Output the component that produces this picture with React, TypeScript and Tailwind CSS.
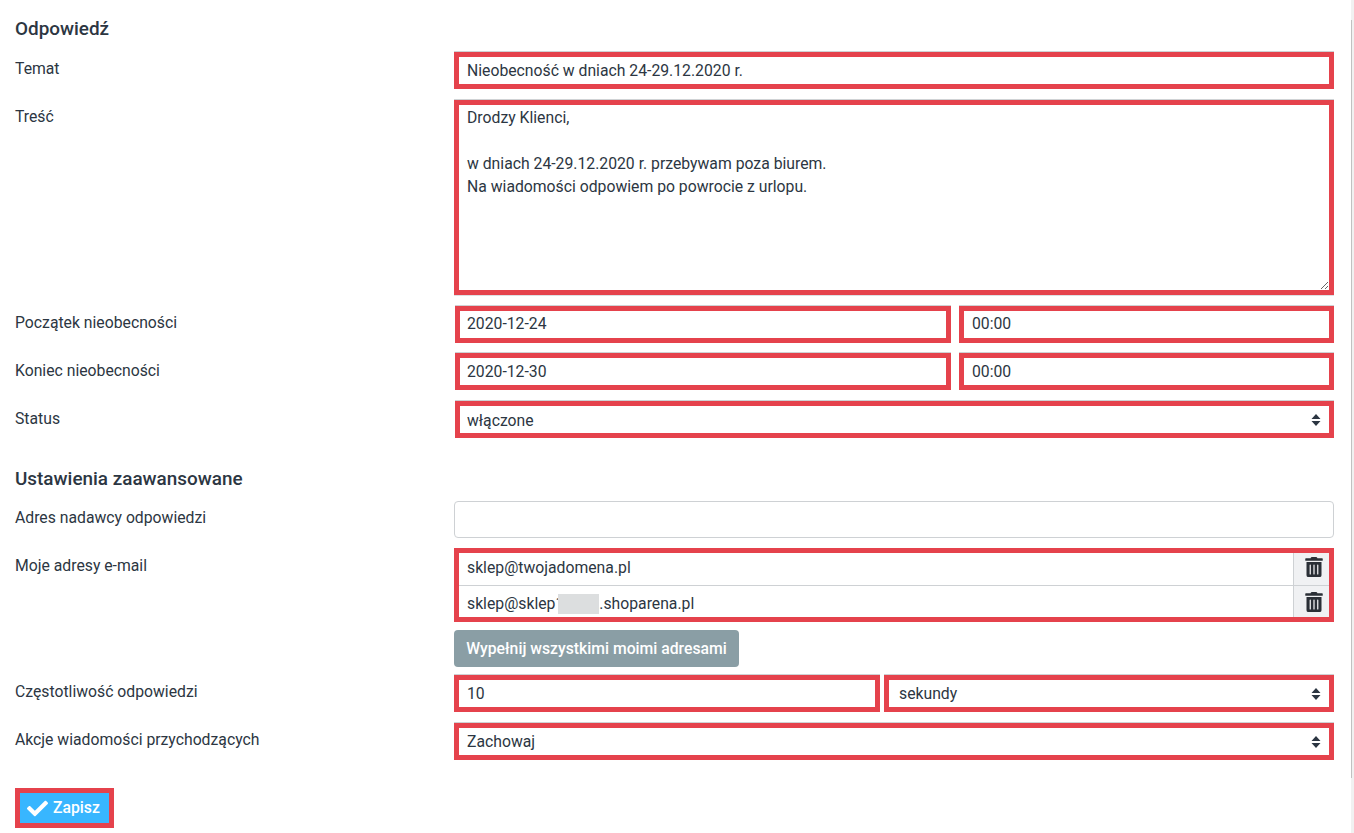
import type { ReactNode } from 'react';
import { FaCheck, FaTrashAlt } from 'react-icons/fa';

const boxed = 'border-[5px] border-[#e5424c] shadow-[0_-1px_0_#cfd2d4]';
const inputBase = 'block w-full bg-white pr-2 text-[15.75px] text-[#2c3642] outline-none';

function Row({ label, children, className, labelClass }: { label: string; children: ReactNode; className?: string; labelClass?: string }) {
  return (
    <div className={`flex ${className ?? ''}`}>
      <div className={`w-[439px] shrink-0 text-[15.75px] leading-[23px] text-[#2c3642] ${labelClass ?? 'pt-[5px]'}`}>{label}</div>
      <div className="w-[880px] shrink-0">{children}</div>
    </div>
  );
}

function Arrows() {
  return (
    <svg viewBox="0 0 10 14" className="pointer-events-none absolute right-[8px] top-[7px] h-[14px] w-[10px]">
      <path d="M5 1 L9.5 6 H0.5 Z M5 13 L0.5 8 H9.5 Z" fill="#2c3642" />
    </svg>
  );
}

function Select({ value, options, className, selectClass }: { value: string; options: string[]; className?: string; selectClass?: string }) {
  return (
    <div className={`relative ${boxed} ${className ?? ''}`}>
      <select defaultValue={value} className={`${inputBase} h-[27px] appearance-none ${selectClass ?? 'pl-2'}`}>
        {options.map(o => (
          <option key={o}>{o}</option>
        ))}
      </select>
      <Arrows />
    </div>
  );
}

function TextField({ value, className }: { value: string; className?: string }) {
  return <input readOnly value={value} className={`${inputBase} ${boxed} box-border h-[37px] ${className ?? 'pl-2'}`} />;
}

function EmailLine({ children, divider }: { children: ReactNode; divider?: boolean }) {
  return (
    <div className={`flex ${divider ? 'h-[33px] border-b border-[#ced1d4]' : 'h-[31px]'}`}>
      <div className={`flex flex-1 items-center pl-2 text-[15.75px] text-[#2c3642] ${divider ? 'pb-[3px]' : 'pt-[4px]'}`}>{children}</div>
      <div className={`flex w-[36px] items-center justify-center border-l border-[#ced1d4] bg-[#f0f1f3] pl-[4px] ${divider ? 'pb-[5px]' : 'pt-[1px]'}`}>
        <FaTrashAlt size={20} className="text-[#2a2f36]" />
      </div>
    </div>
  );
}

export default function App() {
  return (
    <div className="flex h-[833px] w-full overflow-hidden bg-white font-['Roboto',sans-serif]">
      <main className="flex-1 pl-[15px]">
        <h2 className="pt-[18px] pb-[12px] text-[18.9px] leading-[22px] font-medium text-[#2c3642]">Odpowiedź</h2>

        <Row label="Temat" className="mb-[11px]">
          <TextField value="Nieobecność w dniach 24-29.12.2020 r." />
        </Row>
        <Row label="Treść" className="mb-[11px]">
          <textarea
            readOnly
            value={'Drodzy Klienci,\n\nw dniach 24-29.12.2020 r. przebywam poza biurem.\nNa wiadomości odpowiem po powrocie z urlopu.'}
            className={`${boxed} !shadow-[0_-1px_0_#cfd2d4,0_1px_0_#dde0e3] block h-[195px] w-full bg-white px-2 pt-px text-[15.75px] leading-[23px] text-[#2c3642] outline-none`}
          />
        </Row>
        <Row label="Początek nieobecności" className="mb-[10px]">
          <div className="flex justify-between pl-px">
            <TextField value="2020-12-24" className="!w-[496px] pl-[7px] pb-[2px]" />
            <TextField value="00:00" className="!w-[375px] pl-2 pb-[2px]" />
          </div>
        </Row>
        <Row label="Koniec nieobecności" className="mb-[11px]" labelClass="pt-[6px]">
          <div className="flex justify-between pl-px">
            <TextField value="2020-12-30" className="!w-[496px] pl-[7px]" />
            <TextField value="00:00" className="!w-[375px] pl-2" />
          </div>
        </Row>
        <Row label="Status" labelClass="pt-[6px]">
          <Select value="włączone" options={['włączone', 'wyłączone']} className="ml-px" selectClass="pl-[7px] pt-[2px]" />
        </Row>

        <h2 className="pt-[30px] pb-[11px] text-[18.9px] leading-[22px] font-medium text-[#2c3642]">Ustawienia zaawansowane</h2>

        <Row label="Adres nadawcy odpowiedzi" className="mb-[11px]">
          <input readOnly className="block h-[37px] w-full rounded-[4px] border border-[#ced1d4] bg-white outline-none" />
        </Row>
        <Row label="Moje adresy e-mail" className="mb-[8px]">
          <div className={`${boxed} -mt-px shadow-none`}>
            <EmailLine divider>sklep@twojadomena.pl</EmailLine>
            <EmailLine>
              sklep@sklep1
              <span className="ml-[-6px] inline-block h-[20px] w-[41px] bg-[#dcdedf]" />
              .shoparena.pl
            </EmailLine>
          </div>
        </Row>
        <div className="mb-[8px] ml-[439px]">
          <button className="h-[37px] w-[285px] rounded-[4px] bg-[#8a9ea5] text-[15.75px] font-medium text-white">
            Wypełnij wszystkimi moimi adresami
          </button>
        </div>
        <Row label="Częstotliwość odpowiedzi" className="mb-[11px]">
          <div className="flex justify-between">
            <TextField value="10" className="!w-[426px] pl-2" />
            <Select value="sekundy" options={['sekundy', 'minuty', 'godziny']} className="w-[450px]" selectClass="pl-[10px]" />
          </div>
        </Row>
        <Row label="Akcje wiadomości przychodzących" className="mb-[28px]">
          <Select value="Zachowaj" options={['Zachowaj', 'Usuń']} />
        </Row>

        <div className="inline-block border-[5px] border-[#e5424c]">
          <button className="flex h-[30px] w-[89px] items-center gap-[5px] bg-[#38b6ff] pl-[7px] text-[15.75px] font-medium text-white">
            <FaCheck size={21} />
            Zapisz
          </button>
        </div>
      </main>
      <aside className="w-[3px] shrink-0 bg-[#f1f1f1]">
        <div className="mt-[20px] h-[758px] w-full border-l border-[#c1c1c1] bg-[#f1f1f1]" />
      </aside>
    </div>
  );
}
